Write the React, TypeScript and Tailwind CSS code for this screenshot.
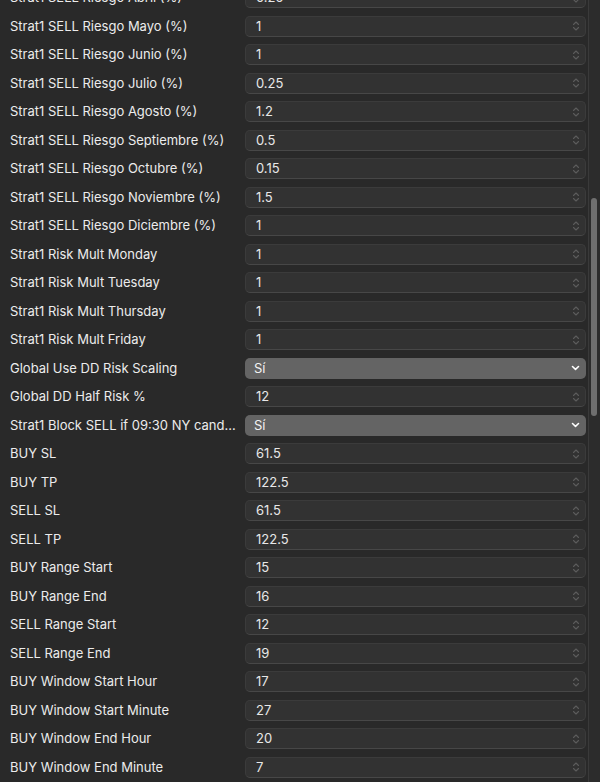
import React from "react";

type Row = { label: string; value: string; kind?: "number" | "select" };

const rows: Row[] = [
  { label: "Strat1 SELL Riesgo Abril (%)", value: "0.25" },
  { label: "Strat1 SELL Riesgo Mayo (%)", value: "1" },
  { label: "Strat1 SELL Riesgo Junio (%)", value: "1" },
  { label: "Strat1 SELL Riesgo Julio (%)", value: "0.25" },
  { label: "Strat1 SELL Riesgo Agosto (%)", value: "1.2" },
  { label: "Strat1 SELL Riesgo Septiembre (%)", value: "0.5" },
  { label: "Strat1 SELL Riesgo Octubre (%)", value: "0.15" },
  { label: "Strat1 SELL Riesgo Noviembre (%)", value: "1.5" },
  { label: "Strat1 SELL Riesgo Diciembre (%)", value: "1" },
  { label: "Strat1 Risk Mult Monday", value: "1" },
  { label: "Strat1 Risk Mult Tuesday", value: "1" },
  { label: "Strat1 Risk Mult Thursday", value: "1" },
  { label: "Strat1 Risk Mult Friday", value: "1" },
  { label: "Global Use DD Risk Scaling", value: "Sí", kind: "select" },
  { label: "Global DD Half Risk %", value: "12" },
  { label: "Strat1 Block SELL if 09:30 NY cand…", value: "Sí", kind: "select" },
  { label: "BUY SL", value: "61.5" },
  { label: "BUY TP", value: "122.5" },
  { label: "SELL SL", value: "61.5" },
  { label: "SELL TP", value: "122.5" },
  { label: "BUY Range Start", value: "15" },
  { label: "BUY Range End", value: "16" },
  { label: "SELL Range Start", value: "12" },
  { label: "SELL Range End", value: "19" },
  { label: "BUY Window Start Hour", value: "17" },
  { label: "BUY Window Start Minute", value: "27" },
  { label: "BUY Window End Hour", value: "20" },
  { label: "BUY Window End Minute", value: "7" },
  { label: "SELL Window Start Hour", value: "9" },
];

function Stepper() {
  return (
    <svg width="8" height="12" viewBox="0 0 8 12" fill="none" className="text-[#5c5c5c]">
      <path d="M1.5 4.5 L4 2 L6.5 4.5" stroke="currentColor" strokeWidth="1.1" strokeLinecap="round" strokeLinejoin="round" />
      <path d="M1.5 7.5 L4 10 L6.5 7.5" stroke="currentColor" strokeWidth="1.1" strokeLinecap="round" strokeLinejoin="round" />
    </svg>
  );
}

function Chevron() {
  return (
    <svg width="9" height="6" viewBox="0 0 9 6" fill="none" className="text-white">
      <path d="M1.5 1.5 L4.5 4.3 L7.5 1.5" stroke="currentColor" strokeWidth="1.6" strokeLinecap="round" strokeLinejoin="round" />
    </svg>
  );
}

function Field({ row }: { row: Row }) {
  if (row.kind === "select") {
    return (
      <div className="flex h-[21px] flex-1 items-center justify-between rounded-[5px] bg-[#646464] pl-[9px] pr-[6px] text-[13px] text-[#f2f2f2]">
        <span>{row.value}</span>
        <Chevron />
      </div>
    );
  }
  return (
    <div className="flex h-[21px] flex-1 items-center justify-between rounded-[5px] border border-[#3b3b3b] border-b-[#474747] bg-[#323232] pl-[10px] pr-[5px] text-[13px] text-[#e8e8e8]">
      <span>{row.value}</span>
      <Stepper />
    </div>
  );
}

export default function App() {
  return (
    <div
      className="flex h-[782px] w-[600px] overflow-hidden bg-[#292929]"
      style={{ fontFamily: "Inter, 'Noto Sans', sans-serif" }}
    >
      <div className="flex-1 overflow-hidden pr-[2px]">
        <div className="-mt-[16.5px] flex flex-col">
          {rows.map((row) => (
            <div key={row.label} className="flex h-[28.5px] items-center pl-[10px]">
              <div className="mr-[6px] w-[229px] shrink-0 whitespace-nowrap text-[13px] text-[#ececec]">
                {row.label}
              </div>
              <Field row={row} />
            </div>
          ))}
        </div>
      </div>
      <div className="relative w-[12px] shrink-0 border-l border-[#3a3a3a] bg-[#2c2c2c]">
        <div className="absolute left-[2px] top-[198px] h-[218px] w-[6px] rounded-full bg-[#6f6f6f]" />
      </div>
    </div>
  );
}
